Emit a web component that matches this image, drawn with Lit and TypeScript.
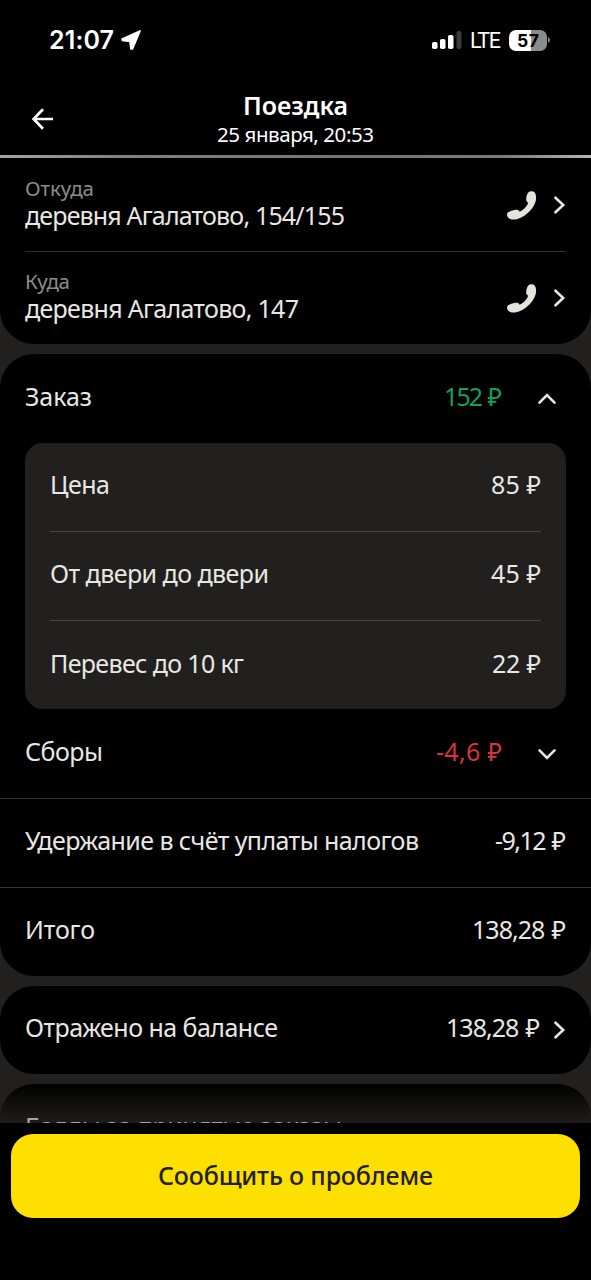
import { LitElement, html, css, svg } from "lit";
import { customElement, property, query } from "lit/decorators.js";

/** Single line of text tracked so that it spans a given width. */
@customElement("fit-text")
class FitText extends LitElement {
  @property() text = "";
  @property({ type: Number }) span = 0;
  @query(".t") el!: HTMLElement;
  static styles = css`
    :host { display: block; flex: none; white-space: pre; }
    .t { display: inline-block; }
  `;
  render() {
    return html`<span class="t">${this.text}</span>`;
  }
  firstUpdated() {
    const natural = this.el.getBoundingClientRect().width;
    const gap = (this.span - natural) / Math.max(1, this.text.length - 1);
    this.el.style.letterSpacing = gap.toFixed(3) + "px";
    this.el.style.marginRight = (-gap).toFixed(3) + "px";
  }
}

const t = (text: string, span: number, cls = "") =>
  html`<fit-text class=${cls} .text=${text} .span=${span}></fit-text>`;

const right = html`<svg class="ic" width="12" height="18" viewBox="0 0 12 18">${svg`<path d="M1.5 1.7 9.2 9l-7.7 7.3" />`}</svg>`;
const up = html`<svg class="ic fold" width="18" height="12" viewBox="0 0 18 12">${svg`<path d="M1.5 9.700 9 2.200l7.500 7.500" />`}</svg>`;
const down = html`<svg class="ic fold" width="18" height="12" viewBox="0 0 18 12">${svg`<path d="M1.500 2.300 9 9.800l7.500-7.500" />`}</svg>`;
const phone = html`<svg class="phone" width="30" height="29" viewBox="0 0 30 29">
  <path d="M22 .8C23.500-.2 26.600 0 27.800 1.700 29.100 3.500 29.500 7 28.700 10c-1 3.800-3 7-5.800 9.900-2.900 3-6 5.300-9.200 6.900-2.600 1.300-5 1.900-7.500 1.800-2-.1-4-.6-4.900-1.800C.4 25.900-.1 24.300.1 22.900c.2-1.200 1.600-2.100 3.300-2.700 2.100-.8 4.800-1.500 6.500-1.400 1.300.1 2.200.9 2.800 1.900 2.300-1.100 4.300-2.700 6-4.700 1.200-1.500 2-2.800 2.400-4.300-1.100-.7-1.800-1.600-1.900-2.900-.1-2.600.6-6.100 2.800-8z"/>
</svg>`;

@customElement("app-root")
class AppRoot extends LitElement {
  static styles = css`
    :host {
      display: flex; flex-direction: column; width: 591px; height: 1280px; overflow: hidden;
      background: #21201f; color: #e8e7e3;
      font: 400 25px/34px "Noto Sans", sans-serif;
    }
    svg { display: block; flex: none; }
    .ic path { fill: none; stroke: #e8e7e3; stroke-width: 2.600; stroke-linecap: round; stroke-linejoin: miter; }
    .top { flex: none; height: 155px; background: #000; color: #fff; display: flex; flex-direction: column; }
    .status { height: 79px; box-sizing: border-box; padding: 1px 41px 0 49px; display: flex; align-items: center; font-family: Inter, sans-serif; }
    .clock { font-size: 25px; font-weight: 600; margin-right: 7px; }
    .lte { font: 400 21.500px/34px Roboto, sans-serif; margin: 0 8px; padding-top: 1px; }
    .grow { flex: 1; }
    .battery { width: 38px; height: 21px; border-radius: 7px; color: #000; display: flex; align-items: center; justify-content: center;
      background: linear-gradient(90deg, #fff 57%, #8c8c8c 57%); font-size: 17.500px; font-weight: 700; line-height: 21px; }
    .nav { flex: 1; display: grid; grid-template-columns: 32px 1fr 32px; padding: 0 30px; }
    .back { margin: 28px 0 0 1px; }
    .heads { display: flex; flex-direction: column; align-items: center; padding-top: 10px; }
    .title { font-weight: 600; line-height: 32px; }
    .date { font-size: 20.500px; line-height: 28px; margin-top: -1px; }
    .edge { flex: none; height: 3px; background: linear-gradient(90deg, #a5a5a0, #82827b 20%, #73766a 60%, #7b7b79 85%, #b5b5b3); }
    .card { flex: none; background: #000; border-radius: 34px; margin-bottom: 10px; }
    .route { border-radius: 0 0 34px 34px; padding: 0 25px; height: 186px; display: flex; flex-direction: column; }
    .stop { height: 93px; box-sizing: border-box; display: flex; align-items: center; padding-top: 1px; }
    .stop + .stop { border-top: 1px solid #302f2e; padding-top: 0; }
    .place { flex: 1; display: flex; flex-direction: column; padding-bottom: 4px; }
    .cap { color: #8d8c89; font-size: 20.500px; line-height: 25px; }
    .addr { line-height: 28px; padding-bottom: 2px; }
    .phone { fill: #e4e4df; margin-right: 17px; }
    .row { display: flex; align-items: center; justify-content: space-between; height: 89px; padding: 0 25px; box-sizing: border-box; }
    .row > fit-text { margin-bottom: 5px; }
    .row .val { margin-left: auto; }
    .wide { word-spacing: 1.500px; }
    .line { border-top: 1px solid #353433; }
    .line > fit-text, .panel .row:not(:last-child) fit-text, .balance fit-text { margin-bottom: 7px; }
    .green { color: #0f9f5f; }
    .red { color: #d9333b; }
    .fold { margin: 0 10px 0 36px; }
    .balance { height: 88px; }
    .next { margin-left: 14px; }
    .panel { margin: 0 25px; background: #21201f; border-radius: 18px; padding: 0 25px; height: 266px; display: flex; flex-direction: column; }
    .panel .row { flex: 1; padding: 0; }
    .panel .row + .row { border-top: 1px solid #454442; }
    .more { height: 39px; border-radius: 34px 34px 0 0; margin: 0; overflow: hidden; padding-left: 25px; box-sizing: border-box;
      background: linear-gradient(#000, #1e1d1b); color: #a5a4a1; }
    .more fit-text { padding-top: 25px; }
    .foot { flex: 1; background: #000; padding: 11px 11px 0; }
    .btn { display: flex; align-items: center; justify-content: center; box-sizing: border-box; width: 100%; height: 84px; padding: 0 0 3px; margin: 0;
      border: 0; border-radius: 22px; background: #fde000; color: #21201f; font: inherit; font-weight: 500; }
  `;

  render() {
    return html`
      <header class="top">
        <div class="status">
          ${t("21:07", 65, "clock")}
          <svg width="20" height="20" viewBox="0 0 20 20"><path fill="#fff" stroke="#fff" stroke-width="1.800" stroke-linejoin="round" d="M19 1 1.200 9l.2 1.400 7.600.9 1 7.500 1.400.1z"/></svg>
          <span class="grow"></span>
          <svg width="30" height="20" viewBox="0 0 30 20" fill="#fff">
            <rect x="0" y="12" width="5.500" height="7" rx="1.700"/><rect x="8" y="9" width="5.500" height="10" rx="1.700"/>
            <rect x="16" y="5" width="5.500" height="14" rx="1.700"/><rect x="24.500" y="1" width="5" height="18" rx="1.700" fill="#3b3b3b"/>
          </svg>
          ${t("LTE", 31, "lte")}
          <div class="battery">${t("57", 22)}</div>
          <svg width="3" height="8" viewBox="0 0 3 8"><path fill="#8c8c8c" d="M1 1q2 1 2 3t-2 3z"/></svg>
        </div>
        <div class="nav">
          <svg class="back" width="24" height="24" viewBox="0 0 24 24"><path fill="none" stroke="#fff" stroke-width="2.700" d="M12 2.200 2.600 12l9.400 9.800M2.600 12H22"/></svg>
          <div class="heads">${t("Поездка", 105, "title")}${t("25 января, 20:53", 157, "date")}</div>
        </div>
      </header>
      <div class="edge"></div>
      <section class="card route">
        <div class="stop"><div class="place">${t("Откуда", 69, "cap")}${t("деревня Агалатово, 154/155", 320, "addr")}</div>${phone}${right}</div>
        <div class="stop"><div class="place">${t("Куда", 45, "cap")}${t("деревня Агалатово, 147", 274, "addr")}</div>${phone}${right}</div>
      </section>
      <section class="card">
        <div class="row">${t("Заказ", 67)}${t("152 ₽", 58, "val green wide")}${up}</div>
        <div class="panel">
          <div class="row">${t("Цена", 60)}${t("85 ₽", 50)}</div>
          <div class="row">${t("От двери до двери", 219)}${t("45 ₽", 50)}</div>
          <div class="row">${t("Перевес до 10 кг", 194)}${t("22 ₽", 49)}</div>
        </div>
        <div class="row">${t("Сборы", 78)}${t("-4,6 ₽", 66, "val red")}${down}</div>
        <div class="row line">${t("Удержание в счёт уплаты налогов", 394)}${t("-9,12 ₽", 71, "wide")}</div>
        <div class="row line">${t("Итого", 70)}${t("138,28 ₽", 94, "wide")}</div>
      </section>
      <section class="card"><div class="row balance">${t("Отражено на балансе", 253)}${t("138,28 ₽", 94, "val wide")}<span class="next">${right}</span></div></section>
      <section class="card more">${t("Баллы за принятые заказы", 317)}</section>
      <footer class="foot"><button class="btn">${t("Сообщить о проблеме", 275)}</button></footer>
    `;
  }
}
